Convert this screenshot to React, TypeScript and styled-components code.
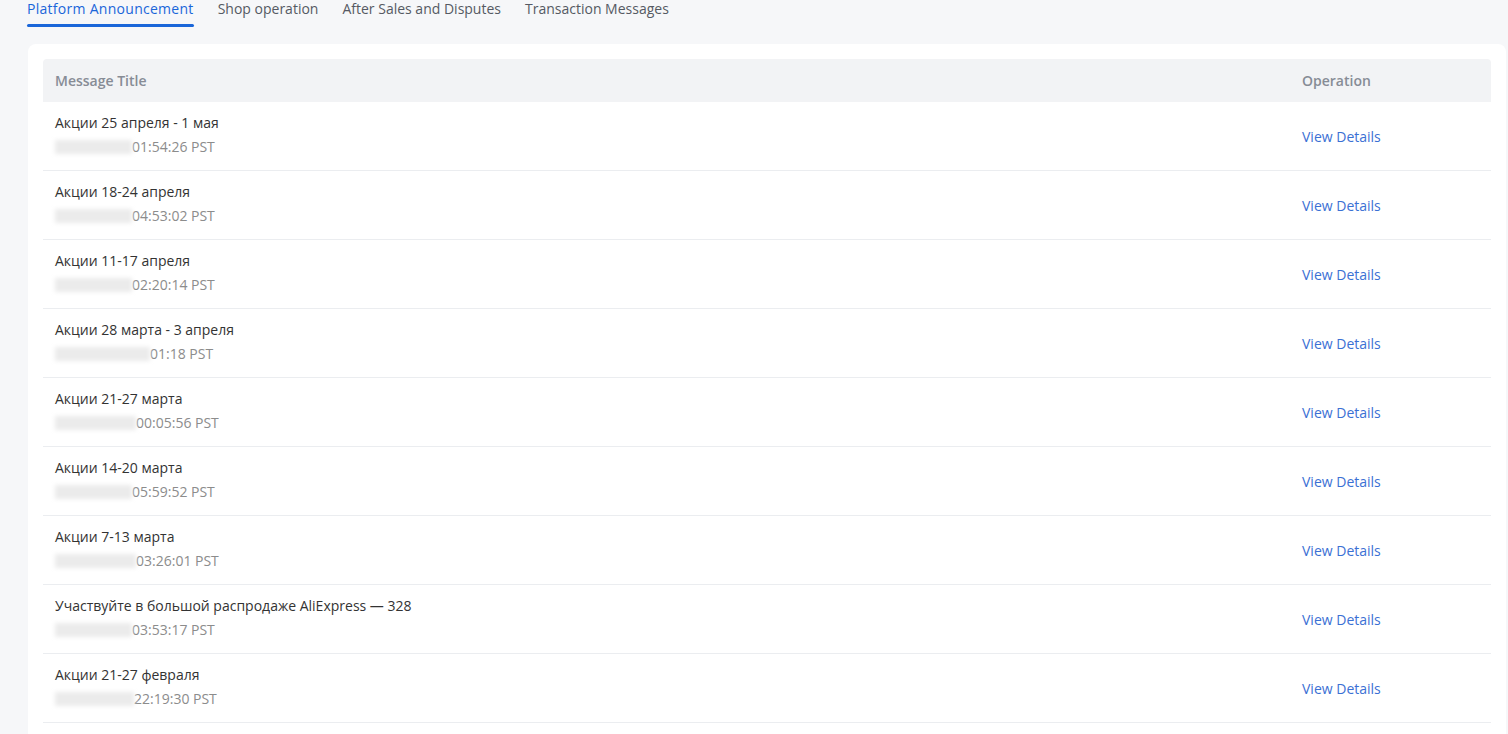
import React from 'react'
import styled, { createGlobalStyle } from 'styled-components'

const GlobalStyle = createGlobalStyle`
  html, body {
    margin: 0;
    padding: 0;
    background: #f6f7f9;
    font-family: "Open Sans", "Liberation Sans", sans-serif;
    font-size: 14px;
    color: #333;
    overflow: hidden;
  }
`

const tabs = [
  'Platform Announcement',
  'Shop operation',
  'After Sales and Disputes',
  'Transaction Messages',
]

type Message = { title: string; time: string; blur: number }

const messages: Message[] = [
  { title: 'Акции 25 апреля - 1 мая', time: '01:54:26 PST', blur: 77 },
  { title: 'Акции 18-24 апреля', time: '04:53:02 PST', blur: 77 },
  { title: 'Акции 11-17 апреля', time: '02:20:14 PST', blur: 77 },
  { title: 'Акции 28 марта - 3 апреля', time: '01:18 PST', blur: 95 },
  { title: 'Акции 21-27 марта', time: '00:05:56 PST', blur: 81 },
  { title: 'Акции 14-20 марта', time: '05:59:52 PST', blur: 77 },
  { title: 'Акции 7-13 марта', time: '03:26:01 PST', blur: 81 },
  {
    title: 'Участвуйте в большой распродаже AliExpress — 328',
    time: '03:53:17 PST',
    blur: 77,
  },
  { title: 'Акции 21-27 февраля', time: '22:19:30 PST', blur: 79 },
]

const App = () => {
  return (
    <Page>
      <GlobalStyle />
      <Tabs>
        {tabs.map((t, i) => (
          <Tab key={t} $active={i === 0}>
            {t}
          </Tab>
        ))}
      </Tabs>
      <Card>
        <Table>
          <thead>
            <tr>
              <Th>Message Title</Th>
              <Th $op>Operation</Th>
            </tr>
          </thead>
          <tbody>
            {messages.map((m) => (
              <tr key={m.title}>
                <Td>
                  <Title>{m.title}</Title>
                  <Time>
                    <Blur $w={m.blur} />
                    {m.time}
                  </Time>
                </Td>
                <Td $op>
                  <Link href="#">View Details</Link>
                </Td>
              </tr>
            ))}
          </tbody>
        </Table>
      </Card>
    </Page>
  )
}

export default App

const Page = styled.div`
  padding: 0 2px 0 28px;
  height: 734px;
`

const Tabs = styled.div`
  display: flex;
  gap: 24px;
  margin-left: -1px;
`

const Tab = styled.div<{ $active?: boolean }>`
  position: relative;
  line-height: 18px;
  padding-bottom: 9px;
  color: ${({ $active }) => ($active ? '#1a66d9' : '#555a63')};
  letter-spacing: ${({ $active }) => ($active ? '0.28px' : '0')};
  white-space: nowrap;

  &::after {
    content: '';
    display: ${({ $active }) => ($active ? 'block' : 'none')};
    position: absolute;
    left: 0;
    right: 0;
    bottom: 0;
    height: 3px;
    border-radius: 2px;
    background: #1a66d9;
  }
`

const Card = styled.div`
  margin-top: 17px;
  background: #fff;
  border-radius: 8px;
  padding: 15px 15px 0;
  height: 800px;
`

const Table = styled.table`
  width: 100%;
  border-collapse: collapse;
`

const Th = styled.th<{ $op?: boolean }>`
  height: 42px;
  padding: 0 12px 1px;
  background: #f2f3f5;
  color: #878c95;
  font-weight: 600;
  text-align: left;
  width: ${({ $op }) => ($op ? '177px' : 'auto')};
  &:first-child {
    border-top-left-radius: 4px;
  }
  &:last-child {
    border-top-right-radius: 4px;
  }
`

const Td = styled.td<{ $op?: boolean }>`
  padding: ${({ $op }) => ($op ? '0 12px' : '9px 12px 11px')};
  border-bottom: 1px solid #ebedf0;
  vertical-align: middle;
`

const Title = styled.div`
  line-height: 24px;
  color: #333;
`

const Time = styled.div`
  display: flex;
  align-items: center;
  line-height: 24px;
  color: #8c8c8c;
`

const Blur = styled.span<{ $w: number }>`
  display: inline-block;
  width: ${({ $w }) => $w}px;
  height: 14px;
  background: #ebebeb;
  filter: blur(2px);
`

const Link = styled.a`
  color: #3b70d4;
  text-decoration: none;
`
